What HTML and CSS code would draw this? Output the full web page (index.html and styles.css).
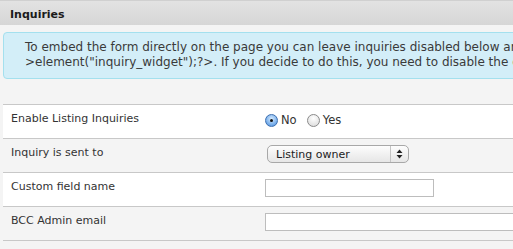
FILE: index.html
```html
<!DOCTYPE html>
<html>
<head>
<meta charset="utf-8">
<link rel="stylesheet" href="styles.css">
</head>
<body>
<div class="panel">
  <div class="panel-head">Inquiries</div>
  <div class="info">
    <div class="info-line">To embed the form directly on the page you can leave inquiries disabled below and</div>
    <div class="info-line">&gt;element("inquiry_widget");?&gt;. If you decide to do this, you need to disable the d</div>
  </div>
  <div class="rows">
    <div class="row">
      <div class="label">Enable Listing Inquiries</div>
      <div class="control">
        <span class="radio checked"></span><span class="opt">No</span>
        <span class="radio"></span><span class="opt">Yes</span>
      </div>
    </div>
    <div class="row alt">
      <div class="label">Inquiry is sent to</div>
      <div class="control">
        <div class="select"><span class="select-text">Listing owner</span><span class="select-arrows"><svg width="7" height="10" viewBox="0 0 7 10"><path d="M3.5 0.5 L6.5 4 L0.5 4 Z M0.5 6 L6.5 6 L3.5 9.5 Z" fill="#222"/></svg></span></div>
      </div>
    </div>
    <div class="row">
      <div class="label">Custom field name</div>
      <div class="control"><div class="input short"></div></div>
    </div>
    <div class="row alt">
      <div class="label">BCC Admin email</div>
      <div class="control"><div class="input long"></div></div>
    </div>
  </div>
</div>
</body>
</html>
```
FILE: styles.css
```css
html, body {
  margin: 0;
  padding: 0;
  background: #f4f4f4;
  font-family: "DejaVu Sans", Verdana, sans-serif;
  color: #333;
  overflow: hidden;
}
.panel {
  width: 513px;
  overflow: hidden;
}
.panel-head {
  height: 25px;
  box-sizing: border-box;
  border-top: 1px solid #d0d0d0;
  background: linear-gradient(#e2e2e2, #d6d6d6);
  font-weight: bold;
  font-size: 11px;
  color: #1a1a1a;
  padding: 7px 0 0 10px;
}
.info {
  margin: 7px 0 0 3px;
  height: 47px;
  box-sizing: border-box;
  width: 560px;
  border: 1px solid #a4e0ee;
  border-radius: 4px;
  background: #d3eef8;
  padding: 7px 0 0 21px;
  font-size: 12px;
  line-height: 15px;
  white-space: nowrap;
  color: #3a3a3a;
}
.rows {
  margin: 25px 0 0 3px;
  border-top: 1px solid #c8c8c8;
}
.row {
  display: flex;
  height: 34px;
  box-sizing: border-box;
  border-bottom: 1px solid #c8c8c8;
  background: #fff;
  font-size: 11px;
}
.row.alt {
  background: #f4f4f4;
}
.label {
  flex: 0 0 262px;
  padding: 7px 0 0 8px;
  box-sizing: border-box;
  color: #333;
}
.control {
  flex: 1;
  min-width: 0;
  overflow: hidden;
  display: flex;
  align-items: center;
  padding-bottom: 3px;
}
.radio {
  flex: 0 0 auto;
  width: 13px;
  height: 13px;
  border-radius: 50%;
  box-sizing: border-box;
  border: 1px solid #8a8a8a;
  background: radial-gradient(circle at 50% 30%, #ffffff, #d8d8d8);
  position: relative;
}
.radio.checked {
  border-color: #3d6fb0;
  background: radial-gradient(circle at 50% 35%, #d6ebff, #6fa8e8 70%, #4a86d4);
}
.radio.checked::after {
  content: "";
  position: absolute;
  left: 4px;
  top: 4px;
  width: 3px;
  height: 3px;
  border-radius: 50%;
  background: #111;
}
.opt {
  font-size: 11.5px;
  color: #333;
  margin: 0 10px 0 3px;
}
.opt:last-child {
  margin-left: 3px;
}
.select {
  margin-left: 2px;
  width: 142px;
  height: 18px;
  box-sizing: border-box;
  border: 1px solid #a8a8a8;
  border-radius: 5px;
  background: linear-gradient(#fdfdfd, #e6e6e6);
  display: flex;
  align-items: center;
  font-size: 11px;
  color: #222;
}
.select-text {
  flex: 1;
  padding-left: 8px;
}
.select-arrows {
  width: 17px;
  height: 16px;
  border-left: 1px solid #c4c4c4;
  display: flex;
  align-items: center;
  justify-content: center;
}
.input {
  flex: 0 0 auto;
  height: 18px;
  box-sizing: border-box;
  border: 1px solid #bdbdbd;
  background: #fff;
}
.input.short {
  width: 169px;
}
.input.long {
  width: 260px;
}
```
